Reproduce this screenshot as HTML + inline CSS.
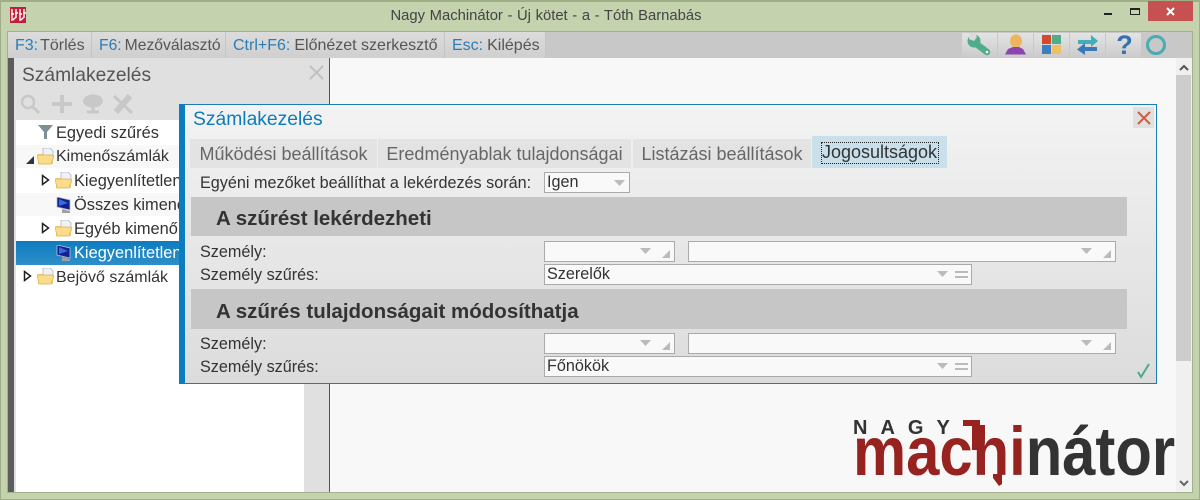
<!DOCTYPE html>
<html><head><meta charset="utf-8"><style>
html,body{margin:0;padding:0}
body{width:1200px;height:500px;overflow:hidden;position:relative;background:#c5d2ae;font-family:"Liberation Sans",sans-serif;font-size:15px;color:#333}
div,span,svg{position:absolute;box-sizing:border-box}
.t{white-space:nowrap;line-height:18px;height:18px}
.tb{top:32px;height:26px;background:linear-gradient(#dcdcdc,#cfcfcf);border-right:1px solid #c4c4c4;line-height:27px;white-space:nowrap;padding-left:7px;color:#555;font-size:16px}
.tb b{font-weight:normal;color:#2b7db5;margin-right:4px}
.ic{top:33px;height:25px;width:35px;background:linear-gradient(#e4e4e4,#cacaca)}
.tab{top:139px;height:29px;background:#e3e3e3;color:#666;font-size:18px;line-height:31px;text-align:center;white-space:nowrap}
.box{background:#f9f9f9;border:1px solid #aaa;height:21px;font-size:16.2px;line-height:19px;padding-left:2px;color:#333}
.sec{left:191px;width:936px;background:#c6c6c6;font-family:"Liberation Sans",sans-serif;font-weight:bold;font-size:20.5px;color:#333;padding-left:25px;white-space:nowrap}
.lab{left:200px;font-size:16.2px}
.tr{font-size:16.4px}
</style></head><body>
<div style="left:0;top:0;width:1200px;height:500px;border:1px solid #a0ae88;border-top-width:2px"></div>
<div style="left:7px;top:31px;width:1186px;height:462px;border:1px solid #a3b08c"></div>
<!-- app icon -->
<div style="left:10px;top:7px;width:16px;height:16px;background:#c0203a"></div>
<svg style="left:10px;top:7px" width="16" height="16"><g fill="none" stroke="#fff" stroke-width="1.4"><path d="M2 2v12M1 7h3M6 2v9M5 6h3M10 2v12M9 7h3M14 2v9M13 6h3M3 13l3-3M11 13l3-3"/></g></svg>
<div class="t" style="left:0;width:1092px;top:7px;text-align:center;font-size:14.8px;color:#444;word-spacing:.5px">Nagy Machinátor - Új kötet - a - Tóth Barnabás</div>
<!-- window controls -->
<div style="left:1104px;top:13px;width:8px;height:2px;background:#222"></div>
<div style="left:1130px;top:8px;width:10px;height:7px;border:1px solid #222;border-top-width:2px"></div>
<div style="left:1148px;top:1px;width:45px;height:20px;background:#c75050"></div>
<svg style="left:1165px;top:6px" width="11" height="11"><path d="M2 2l7 7M9 2l-7 7" stroke="#fff" stroke-width="2"/></svg>
<!-- toolbar -->
<div style="left:8px;top:32px;width:1184px;height:26px;background:#c8c8c8"></div>
<div class="tb" style="left:8px;width:84px"><b style="margin-right:2px">F3:</b>Törlés</div>
<div class="tb" style="left:92px;width:134px;font-size:15.7px"><b style="margin-right:3px">F6:</b>Mezőválasztó</div>
<div class="tb" style="left:226px;width:219px"><b>Ctrl+F6:</b>Előnézet szerkesztő</div>
<div class="tb" style="left:445px;width:101px"><b>Esc:</b>Kilépés</div>
<div class="ic" style="left:962px"></div><div class="ic" style="left:998px"></div><div class="ic" style="left:1034px"></div><div class="ic" style="left:1070px"></div><div class="ic" style="left:1106px"></div>
<svg style="left:966px;top:33px" width="26" height="24"><path d="M9 10L21 19" stroke="#4fae8a" stroke-width="6.500" stroke-linecap="round"/><circle cx="8" cy="8" r="6.500" fill="#4fae8a"/><path d="M3 0h6l2 4-3 4-5-2z" fill="#dadada"/><circle cx="21" cy="19" r="1.300" fill="#fff"/></svg>
<svg style="left:1005px;top:34px" width="22" height="22"><ellipse cx="11" cy="7" rx="6" ry="6.800" fill="#edb55f"/><path d="M0 20.500 L3 15 L8 13 L14 13 L18 15 L21 20.500 Z" fill="#8e44ad"/></svg>
<div style="left:1042px;top:35px;width:9px;height:9px;background:#d5492f"></div><div style="left:1052px;top:35px;width:9px;height:9px;background:#4fae8a"></div>
<div style="left:1042px;top:45px;width:9px;height:9px;background:#3a7fc0"></div><div style="left:1052px;top:45px;width:9px;height:9px;background:#f0c060"></div>
<svg style="left:1076px;top:34px" width="24" height="22"><path d="M2 6h13V1l7 6-7 6V10H2z" fill="#3fb0b8"/><path d="M21 13H9V9l-8 6.500 8 5.500v-4h12z" fill="#3a78b8"/></svg>
<div class="t" style="left:1113.500px;top:32px;width:22px;height:26px;line-height:27px;text-align:center;font-weight:bold;font-size:27px;color:#3670b0">?</div>
<div style="left:1146px;top:35px;width:20px;height:20px;border:3.5px solid #4aabb0;border-radius:50%"></div>
<!-- left panel -->
<div style="left:8px;top:58px;width:6px;height:434px;background:#5c5c5c"></div>
<div style="left:14px;top:58px;width:316px;height:434px;background:#e0e0e0;border-right:1px solid #555"></div>
<div class="t" style="left:22px;top:64px;font-size:19.2px;line-height:24px;height:24px;color:#555">Számlakezelés</div>
<svg style="left:309px;top:65px" width="15" height="15"><path d="M1 1l13 13M14 1L1 14" stroke="#c0c0c0" stroke-width="2"/></svg>
<svg style="left:20px;top:94px" width="124" height="24"><circle cx="8" cy="8" r="6" fill="none" stroke="#c8c8c8" stroke-width="2.500"/><path d="M13 13l6 6" stroke="#c8c8c8" stroke-width="3"/><path d="M42 1v18M32 10h20" stroke="#c8c8c8" stroke-width="4"/><ellipse cx="73" cy="7" rx="10" ry="6.500" fill="#c8c8c8"/><path d="M73 10v7M67 18h12" stroke="#c8c8c8" stroke-width="3"/><path d="M94 2l18 17" stroke="#c8c8c8" stroke-width="3"/><path d="M110 2L96 18" stroke="#c8c8c8" stroke-width="6"/></svg>
<div style="left:16px;top:120px;width:288px;height:372px;background:#fff"></div>
<div style="left:16px;top:145px;width:288px;height:23px;background:#f8f8f8"></div>
<div style="left:16px;top:193px;width:288px;height:23px;background:#f8f8f8"></div>
<div style="left:16px;top:241px;width:288px;height:24px;background:linear-gradient(#0e7cc0,#2d8fc8)"></div>
<svg style="left:38px;top:125px" width="15" height="15"><path d="M0 0h15L9 7v7H6V7z" fill="#7d8f96"/></svg>
<svg width="0" height="0" style="left:0;top:0"><defs><g id="f"><path d="M1 6h5l1-2h9v12H1z" fill="#f2cf72"/><path d="M6 0h7l3 3v8H6z" fill="#eef3fa" stroke="#aab" stroke-width=".7"/><path d="M0 7h15l2 1-3 8H2z" fill="#fbdc8a" stroke="#dcb050" stroke-width=".7"/></g><g id="m"><path d="M1 0l13 3v10L1 10z" fill="#12208c" stroke="#bbc" stroke-width=".8"/><path d="M3 2l9 4-9 3z" fill="#3a6adc"/><path d="M6 12l8 2v2H6z" fill="#a0a0a0"/></g></defs></svg>
<svg style="left:37px;top:148px" width="18" height="17"><use href="#f"/></svg>
<svg style="left:55px;top:172px" width="18" height="17"><use href="#f"/></svg>
<svg style="left:55px;top:220px" width="18" height="17"><use href="#f"/></svg>
<svg style="left:37px;top:268px" width="18" height="17"><use href="#f"/></svg>
<svg style="left:56px;top:197px" width="16" height="17"><use href="#m"/></svg>
<svg style="left:56px;top:245px" width="16" height="17"><use href="#m"/></svg>
<svg style="left:25px;top:155px" width="10" height="10"><path d="M9 1v8H1z" fill="#333"/></svg>
<svg style="left:41px;top:174px" width="9" height="12"><path d="M1.500 1.500l6 4.500-6 4.500z" fill="#fff" stroke="#222" stroke-width="1.500"/></svg>
<svg style="left:41px;top:222px" width="9" height="12"><path d="M1.500 1.500l6 4.500-6 4.500z" fill="#fff" stroke="#222" stroke-width="1.500"/></svg>
<svg style="left:23px;top:270px" width="9" height="12"><path d="M1.500 1.500l6 4.500-6 4.500z" fill="#fff" stroke="#222" stroke-width="1.500"/></svg>
<div class="t tr" style="left:56px;top:124px">Egyedi szűrés</div>
<div class="t tr" style="left:56px;top:148px;font-size:16px">Kimenőszámlák</div>
<div class="t tr" style="left:74px;top:172px">Kiegyenlítetlen</div>
<div class="t tr" style="left:74px;top:196px">Összes kimenő</div>
<div class="t tr" style="left:74px;top:220px">Egyéb kimenő</div>
<div class="t tr" style="left:74px;top:244px;color:#fff">Kiegyenlítetlen</div>
<div class="t tr" style="left:56px;top:269px;font-size:16px">Bejövő számlák</div>
<!-- main -->
<div style="left:330px;top:58px;width:846px;height:434px;background:#f8f8f8"></div>
<!-- scrollbar -->
<div style="left:1176px;top:58px;width:16px;height:434px;background:#f0f0f0"></div>
<div style="left:1176px;top:75px;width:15px;height:286px;background:#cdcdcd"></div>
<svg style="left:1178px;top:64px" width="12" height="8"><path d="M2 6l4-4 4 4" fill="none" stroke="#555" stroke-width="2"/></svg>
<svg style="left:1178px;top:479px" width="12" height="8"><path d="M2 2l4 4 4-4" fill="none" stroke="#666" stroke-width="2"/></svg>
<!-- logo -->
<div class="t" style="left:853px;top:415px;font-weight:bold;font-size:20px;height:26px;line-height:26px;letter-spacing:13px;color:#333">NAGY</div>
<div class="t" style="left:853px;top:419px;height:66px;line-height:66px;font-weight:bold;font-size:69px;color:#962320;transform:scaleX(.866);transform-origin:0 0">machi<span style="position:static;color:#333">nátor</span></div>
<svg style="left:960px;top:418px" width="50" height="70"><path d="M3 2h17v30h-8V8H3z" fill="#962320"/><path d="M33 56h9v10l-3 2-6-8z" fill="#962320"/></svg>
<!-- dialog -->
<div style="left:179px;top:104px;width:978px;height:280px;background:linear-gradient(#f3f3f3,#dcdcdc);border:1px solid #1a7db5;border-left:6px solid #0a7cc0"></div>
<div class="t" style="left:193px;top:108px;font-size:19.3px;line-height:24px;height:24px;color:#0f7cb8">Számlakezelés</div>
<div style="left:1133px;top:107px;width:21px;height:21px;background:#e0e0e0"></div>
<svg style="left:1136px;top:110px" width="16" height="16"><path d="M2 2l12 12M14 2L2 14" stroke="#d5573c" stroke-width="2"/></svg>
<div class="tab" style="left:190px;width:187px">Működési beállítások</div>
<div class="tab" style="left:378px;width:253px">Eredményablak tulajdonságai</div>
<div class="tab" style="left:633px;width:178px">Listázási beállítások</div>
<div class="tab" style="left:812px;top:136px;width:135px;height:32px;background:#c9dfea;color:#333;line-height:33px">Jogosultságok</div>
<div style="left:821px;top:142px;width:118px;height:22px;border:1px dotted #222"></div>
<div class="t lab" style="top:174px">Egyéni mezőket beállíthat a lekérdezés során:</div>
<div class="box" style="left:544px;top:172px;width:86px">Igen</div>
<svg style="left:613px;top:179px" width="13" height="8"><path d="M1 1h11L6.500 7z" fill="#bbb"/></svg>
<div class="sec" style="top:197px;height:39px;line-height:44px">A szűrést lekérdezheti</div>
<div class="sec" style="top:289px;height:40px;line-height:45px">A szűrés tulajdonságait módosíthatja</div>
<div class="t lab" style="top:243px">Személy:</div>
<div class="t lab" style="top:266px">Személy szűrés:</div>
<div class="t lab" style="top:335px">Személy:</div>
<div class="t lab" style="top:358px">Személy szűrés:</div>
<div class="box" style="left:544px;top:241px;width:131px"></div>
<div class="box" style="left:688px;top:241px;width:428px"></div>
<div class="box" style="left:544px;top:264px;width:428px">Szerelők</div>
<div class="box" style="left:544px;top:333px;width:131px"></div>
<div class="box" style="left:688px;top:333px;width:428px"></div>
<div class="box" style="left:544px;top:356px;width:428px">Főnökök</div>
<svg style="left:530px;top:230px" width="600" height="160"><g fill="#bbb">
<path d="M110 18h11l-5.500 6z"/><path d="M132 28l8-8v8z"/>
<path d="M551 18h11l-5.500 6z"/><path d="M573 28l8-8v8z"/>
<path d="M407 41h11l-5.500 6z"/><path d="M425 41h13v2h-13zM425 46h13v2h-13z"/>
<path d="M110 110h11l-5.500 6z"/><path d="M132 120l8-8v8z"/>
<path d="M551 110h11l-5.500 6z"/><path d="M573 120l8-8v8z"/>
<path d="M407 133h11l-5.500 6z"/><path d="M425 133h13v2h-13zM425 138h13v2h-13z"/></g></svg>
<svg style="left:1135px;top:362px" width="18" height="17"><path d="M3 10l3 5L14 2" fill="none" stroke="#4faa88" stroke-width="2"/></svg>
</body></html>
